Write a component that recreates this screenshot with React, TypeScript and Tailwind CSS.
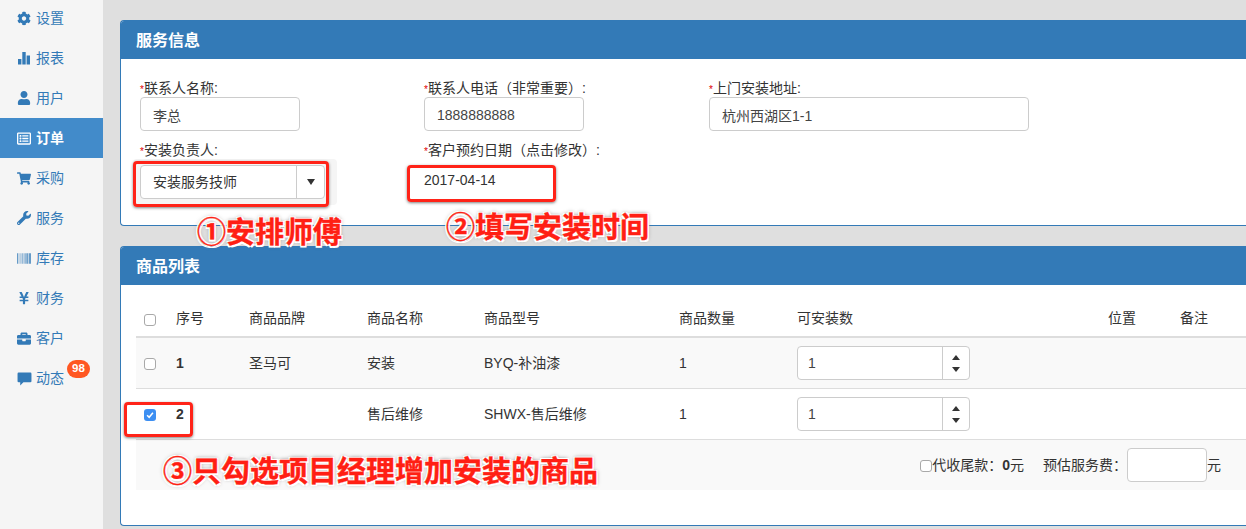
import type { ReactNode } from "react";
import { FaBarcode, FaBriefcase, FaCog, FaRegListAlt, FaShoppingCart, FaUser, FaWrench, FaYenSign } from "react-icons/fa";

const StatsIcon = () => (
  <svg viewBox="0 0 14 14" className="h-[14px] w-[14px]" fill="currentColor">
    <rect x="1" y="8" width="3.4" height="5.5" />
    <rect x="5.3" y="1" width="3.4" height="12.5" />
    <rect x="9.6" y="4.5" width="3.4" height="9" />
  </svg>
);

const CommentIcon = () => (
  <svg viewBox="0 0 14 14" className="h-[15px] w-[15px] shrink-0" fill="currentColor">
    <path d="M1.500 1.500h11a1 1 0 0 1 1 1v7a1 1 0 0 1-1 1H6l-3 3v-3H1.500a1 1 0 0 1-1-1v-7a1 1 0 0 1 1-1z" />
  </svg>
);

const navItems: { label: string; icon: ReactNode; active?: boolean; badge?: string }[] = [
  { label: "设置", icon: <FaCog size={15} /> },
  { label: "报表", icon: <StatsIcon /> },
  { label: "用户", icon: <FaUser size={14} /> },
  { label: "订单", icon: <FaRegListAlt size={15} />, active: true },
  { label: "采购", icon: <FaShoppingCart size={15} /> },
  { label: "服务", icon: <FaWrench size={14} /> },
  { label: "库存", icon: <FaBarcode size={15} /> },
  { label: "财务", icon: <FaYenSign size={14} /> },
  { label: "客户", icon: <FaBriefcase size={15} /> },
  { label: "动态", icon: <CommentIcon />, badge: "98" },
];

const rowGrid = "grid grid-cols-[32px_73px_118px_117px_195px_118px_311px_72px_1fr] items-center pl-2";

function Panel({ title, className, children }: { title: string; className: string; children: ReactNode }) {
  return (
    <section className={`overflow-hidden rounded-l-[4px] border border-r-0 border-[#337ab7] bg-white ${className}`}>
      <h2 className="flex h-[38px] items-center bg-[#337ab7] pl-[15px] pt-[2px] text-[16px] font-bold text-white">{title}</h2>
      {children}
    </section>
  );
}

function Field({ label, children }: { label: string; children: ReactNode }) {
  return (
    <div className="flex flex-col">
      <label className="h-[20px] pt-[1px] text-[14px] leading-[20px] text-[#333]">
        <span className="text-[10px] text-[#e00000]">*</span>
        {label}
      </label>
      {children}
    </div>
  );
}

function TextInput({ value, className }: { value: string; className: string }) {
  return (
    <input
      readOnly
      value={value}
      className={`h-[34px] rounded-[4px] border border-[#ccc] bg-white px-3 pt-[2px] text-[14px] text-[#444] outline-none ${className}`}
    />
  );
}

function Check({ checked }: { checked?: boolean }) {
  if (checked) {
    return (
      <span className="mt-[2px] flex h-3 w-3 items-center justify-center rounded-[3px] bg-[#3d8ff2]">
        <svg viewBox="0 0 12 12" className="h-[10px] w-[10px]" fill="none" stroke="white" strokeWidth="1.8">
          <path d="M2.500 6.300 5 8.800 9.500 3.200" />
        </svg>
      </span>
    );
  }
  return <span className="mt-[2px] block h-3 w-3 rounded-[3px] border border-[#a9a9a9] bg-white" />;
}

function Stepper() {
  return (
    <div className="flex h-[34px] w-[173px] items-center rounded-[4px] border border-[#ccc] bg-white text-[14px] text-[#444]">
      <span className="flex-1 pl-[10px]">1</span>
      <span className="flex h-full w-[27px] flex-col items-center justify-center gap-[7px] border-l border-[#ccc]">
        <span className="h-0 w-0 border-x-[4px] border-b-[5px] border-x-transparent border-b-[#333]" />
        <span className="h-0 w-0 border-x-[4px] border-t-[5px] border-x-transparent border-t-[#333]" />
      </span>
    </div>
  );
}

function Row({ n, brand, name, model, striped }: { n: string; brand: string; name: string; model: string; striped?: boolean }) {
  return (
    <div className={`${rowGrid} h-[51px] border-b border-[#ddd] text-[14px] text-[#333] ${striped ? "bg-[#f9f9f9]" : ""}`}>
      <Check checked={!striped} />
      <span className="font-bold">{n}</span>
      <span>{brand}</span>
      <span>{name}</span>
      <span>{model}</span>
      <span>1</span>
      <Stepper />
    </div>
  );
}

const annotation =
  "absolute whitespace-nowrap text-[29px] font-bold leading-none text-[#ff1f14] [-webkit-text-stroke:0.4px_#ff1f14] [text-shadow:-1.5px_-1.5px_0_#fff,1.5px_-1.5px_0_#fff,-1.5px_1.5px_0_#fff,1.5px_1.5px_0_#fff,0_0_4px_#666]";
const redBox = "absolute rounded-[4px] border-[3px] border-[#ff2318] shadow-[0_1px_3px_rgba(0,0,0,0.5)]";

export default function App() {
  return (
    <div className="relative flex h-[529px] w-[1246px] overflow-hidden bg-[#dfdfdf] font-['Liberation_Sans','Noto_Sans_CJK_SC',sans-serif]">
      <nav className="-mt-[2px] h-[531px] w-[103px] shrink-0 bg-[#f5f5f5]">
        {navItems.map((item) => (
          <div
            key={item.label}
            className={`relative flex h-[40px] items-center gap-[5px] pl-[17px] text-[14px] ${
              item.active ? "bg-[#428bca] font-bold text-white" : "text-[#337ab7]"
            }`}
          >
            <span className="flex w-[14px] justify-center">{item.icon}</span>
            <span className="pt-[1px]">{item.label}</span>
            {item.badge && (
              <span className="absolute left-[67px] top-[2px] flex h-[18px] w-[23px] items-center justify-center rounded-full bg-[#ff5722] text-[11.5px] font-bold text-white">
                {item.badge}
              </span>
            )}
          </div>
        ))}
      </nav>

      <main className="flex-1 pl-[17px] pt-5">
        <Panel title="服务信息" className="h-[206px]">
          <div className="grid grid-cols-[284px_285px_320px] gap-y-[8px] pl-[19px] pt-[18px]">
            <Field label="联系人名称:">
              <TextInput value="李总" className="w-[160px]" />
            </Field>
            <Field label="联系人电话（非常重要）:">
              <TextInput value="1888888888" className="w-[160px]" />
            </Field>
            <Field label="上门安装地址:">
              <TextInput value="杭州西湖区1-1" className="w-[320px]" />
            </Field>
            <Field label="安装负责人:">
              <div className="-ml-[7px] w-[204px] rounded-[4px] bg-[#f5f5f5] py-[6px] pl-[7px]">
                <div className="flex h-[34px] w-[185px] items-center rounded-[4px] border border-[#ccc] bg-white text-[14px] text-[#333]">
                  <span className="flex-1 pl-3 pt-[1px]">安装服务技师</span>
                  <span className="flex h-full w-[28px] items-center justify-center border-l border-[#ccc]">
                    <span className="h-0 w-0 border-x-[4px] border-t-[6px] border-x-transparent border-t-[#333]" />
                  </span>
                </div>
              </div>
            </Field>
            <Field label="客户预约日期（点击修改）:">
              <span className="pt-[11px] text-[14px] leading-[20px] text-[#333]">2017-04-14</span>
            </Field>
          </div>
        </Panel>

        <Panel title="商品列表" className="mt-5 h-[280px]">
          <div className="pl-[15px] pt-[13px]">
            <div className={`${rowGrid} h-[40px] border-b-2 border-[#ddd] pt-[2px] text-[14px] text-[#333]`}>
              <span className="pt-[2px]">
                <Check />
              </span>
              <span>序号</span>
              <span>商品品牌</span>
              <span>商品名称</span>
              <span>商品型号</span>
              <span>商品数量</span>
              <span>可安装数</span>
              <span>位置</span>
              <span>备注</span>
            </div>
            <Row n="1" brand="圣马可" name="安装" model="BYQ-补油漆" striped />
            <Row n="2" brand="" name="售后维修" model="SHWX-售后维修" />
            <div className="flex h-[50px] items-center justify-end bg-[#f9f9f9] pr-[25px] text-[14px] text-[#333]">
              <Check />
              <span>代收尾款：</span>
              <b>0</b>
              <span>元</span>
              <span className="ml-[19px]">预估服务费：</span>
              <span className="h-[34px] w-[80px] rounded-[4px] border border-[#ccc] bg-white" />
              <span>元</span>
            </div>
          </div>
        </Panel>
      </main>

      <div className={`${redBox} left-[133px] top-[161px] h-[46px] w-[196px]`} />
      <div className={`${redBox} left-[407px] top-[165px] h-[37px] w-[149px]`} />
      <div className={`${redBox} left-[124px] top-[402px] h-[35px] w-[69px]`} />
      <span className={`${annotation} left-[197px] top-[219px]`}>①安排师傅</span>
      <span className={`${annotation} left-[446px] top-[214px]`}>②填写安装时间</span>
      <span className={`${annotation} left-[163px] top-[458px]`}>③只勾选项目经理增加安装的商品</span>
    </div>
  );
}
